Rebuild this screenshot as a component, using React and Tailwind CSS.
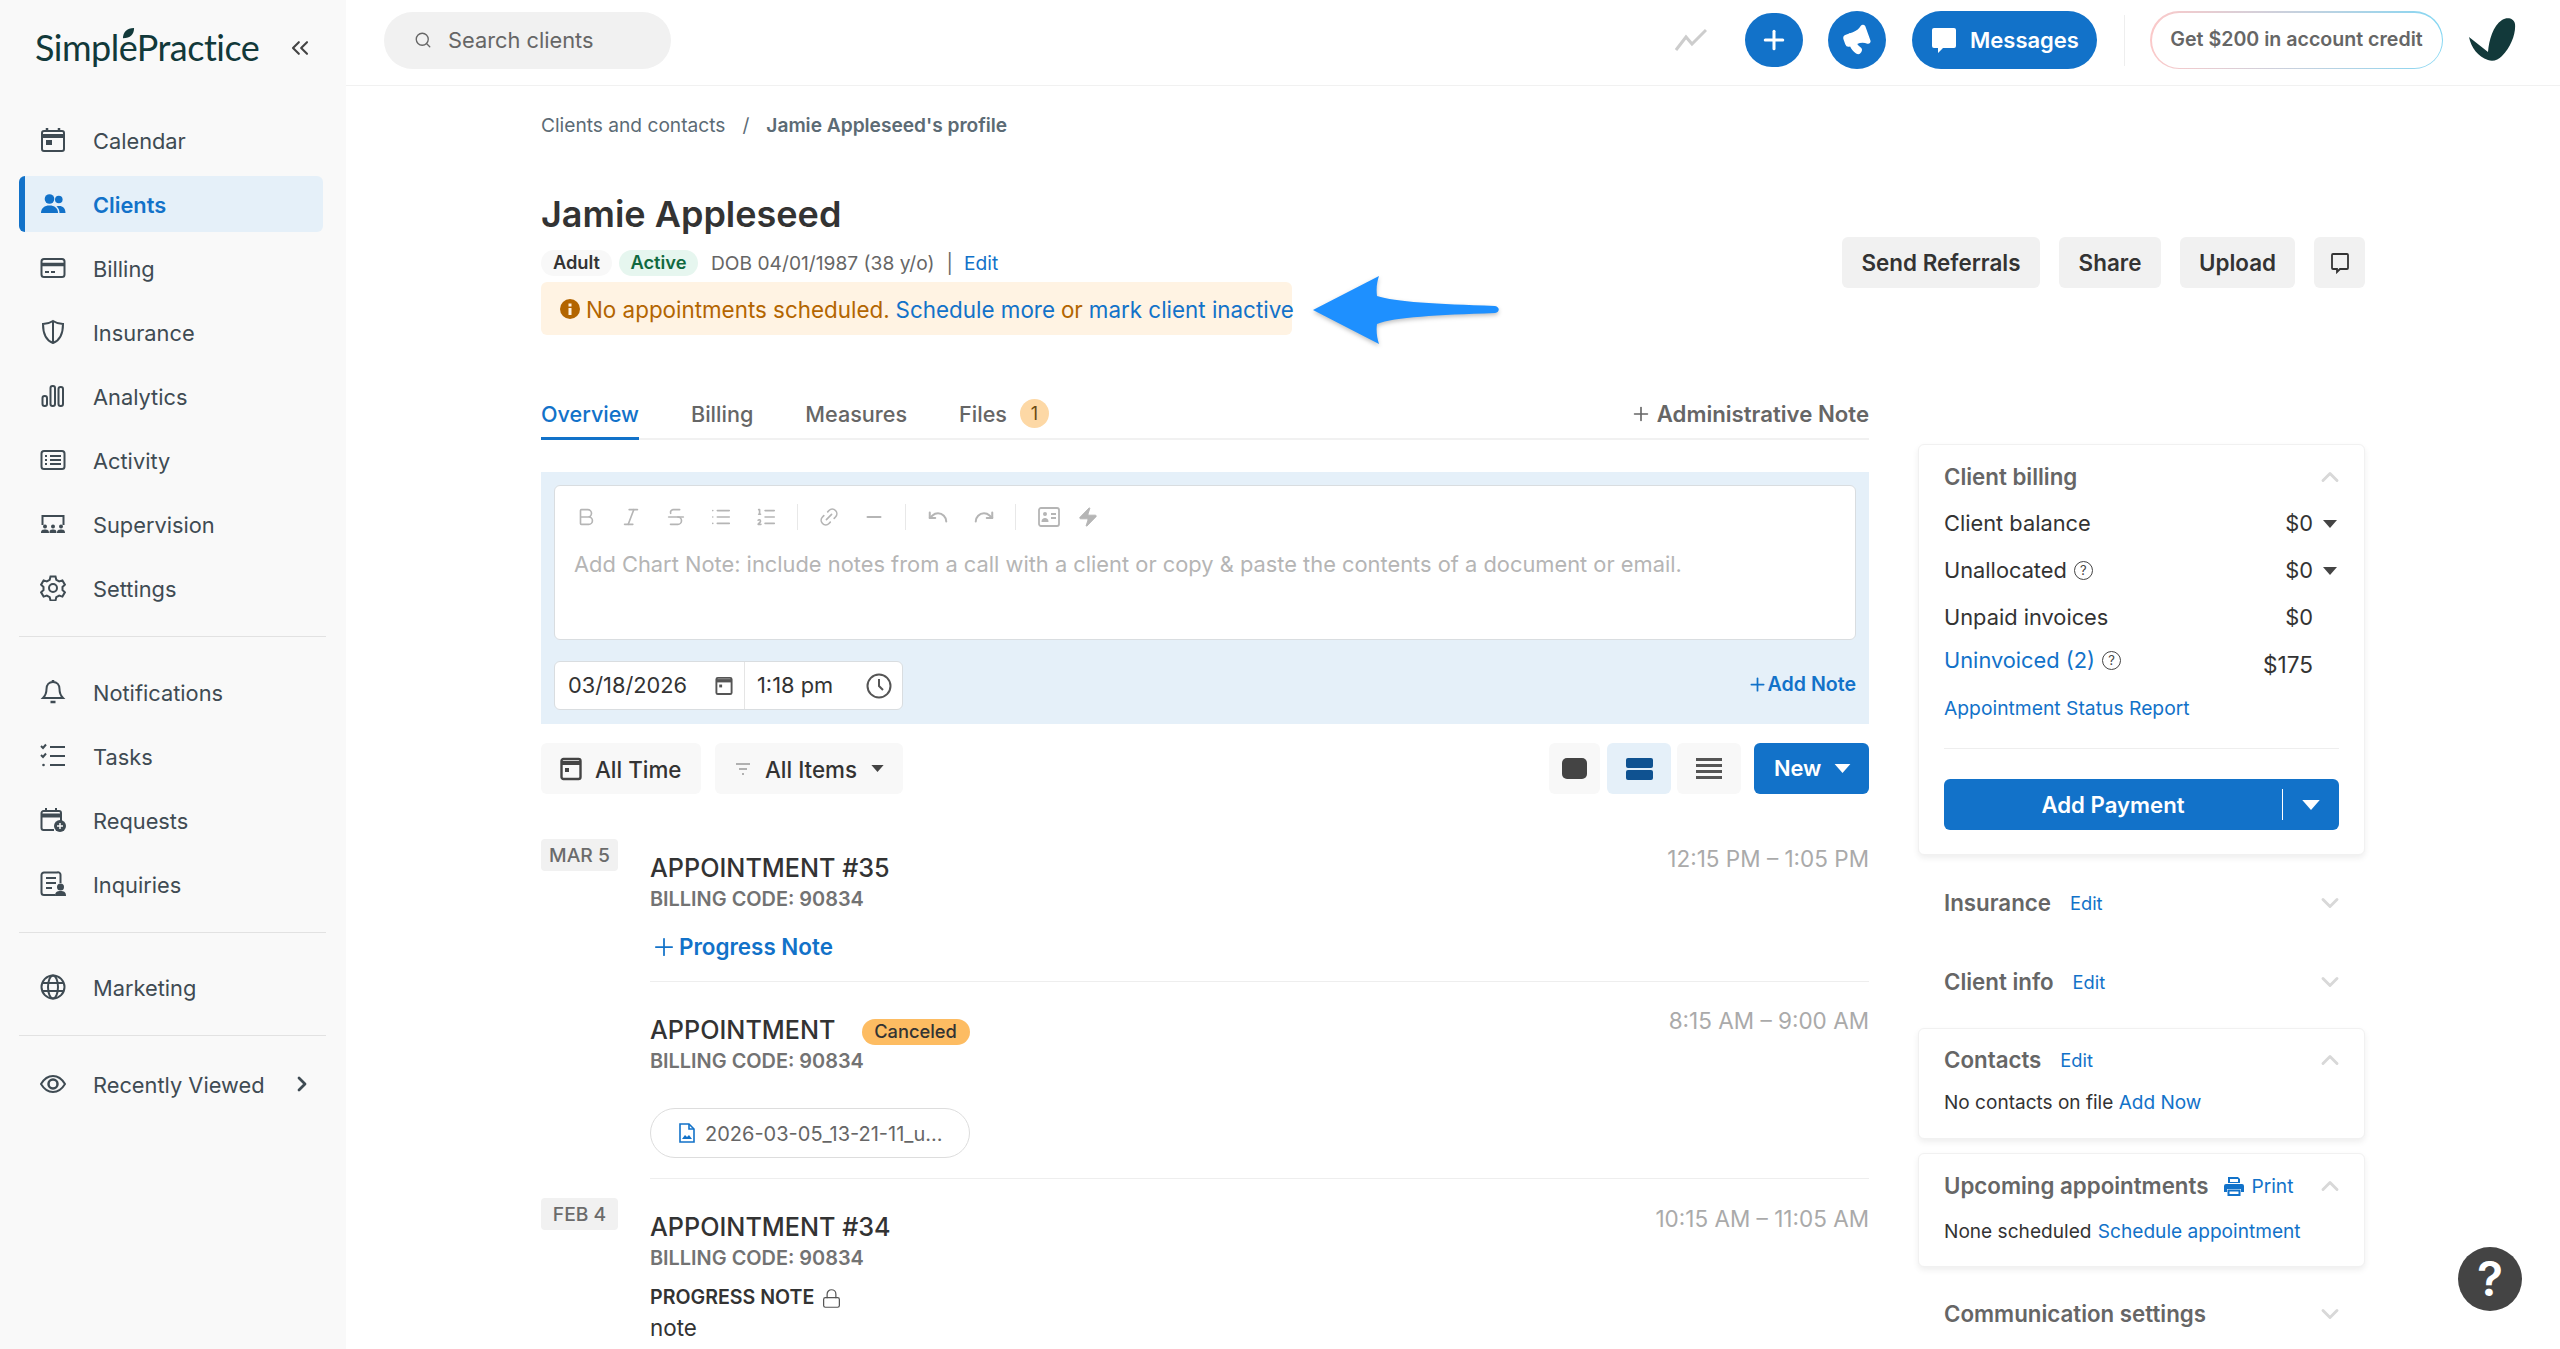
import React from 'react'
import {
  Bold, Italic, Strikethrough, List, ListOrdered, Link2, Minus, Undo, Redo, Zap,
  Plus, Megaphone, ChevronsLeft, ChevronRight, ChevronUp, ChevronDown, Search, Lock,
} from 'lucide-react'

const iconProps = { viewBox: '0 0 26 26', fill: 'none', stroke: 'currentColor', strokeWidth: 2 }

// sidebar icons
const CalendarIcon = () => (
  <svg {...iconProps} className="w-[26px] h-[26px]">
    <rect x="2" y="4" width="22" height="20" rx="2" />
    <path d="M2 9h22" strokeWidth="4" />
    <path d="M7 1v4M19 1v4" strokeWidth="2.5" />
    <rect x="6" y="13" width="6" height="5" fill="currentColor" stroke="none" />
  </svg>
)
const ClientsIcon = () => (
  <svg viewBox="0 0 26 26" fill="currentColor" className="w-[26px] h-[26px]">
    <circle cx="9.5" cy="8" r="4.8" />
    <circle cx="18.8" cy="8.5" r="3.8" />
    <path d="M1 22c0-5 3.5-7.5 8.5-7.5S18 17 18 22z" />
    <path d="M19.5 22c0-3-1-5-3-6.6 5-1.6 9 1 9 6.6z" />
  </svg>
)
const BillingIcon = () => (
  <svg {...iconProps} className="w-[26px] h-[26px]">
    <rect x="1.5" y="4" width="23" height="18" rx="2.5" />
    <path d="M1.5 9.5h23" strokeWidth="3.5" />
    <path d="M5 17h4M11 17h4" />
  </svg>
)
const InsuranceIcon = () => (
  <svg {...iconProps} className="w-[26px] h-[26px]">
    <path d="M13 2c3 2 6 3 10 3 0 9-2 16-10 19C5 21 3 14 3 5c4 0 7-1 10-3z" />
    <path d="M13 2v22" />
  </svg>
)
const AnalyticsIcon = () => (
  <svg {...iconProps} className="w-[26px] h-[26px]">
    <rect x="2.5" y="13" width="4.5" height="10" rx="2" />
    <rect x="10.5" y="3" width="4.5" height="20" rx="2" />
    <rect x="18.5" y="4" width="4.5" height="19" rx="2" />
  </svg>
)
const ActivityIcon = () => (
  <svg {...iconProps} className="w-[26px] h-[26px]">
    <rect x="1.5" y="4" width="23" height="18" rx="2.5" />
    <path d="M10 9h11M10 13h11M10 17h11M5 9h2M5 13h2M5 17h2" />
  </svg>
)
const SupervisionIcon = () => (
  <svg viewBox="0 0 26 26" className="w-[26px] h-[26px]" fill="currentColor">
    <path d="M2.5 14V5h21v9" fill="none" stroke="currentColor" strokeWidth="2" />
    <circle cx="5" cy="15.5" r="2" /><circle cx="13" cy="15.5" r="2" /><circle cx="21" cy="15.5" r="2" />
    <path d="M1 22c0-3 1.5-3.5 4-3.5s4 .5 4 3.5zM9.5 22c0-3 1-3.5 3.5-3.5s3.5.5 3.5 3.5zM17 22c0-3 1.5-3.5 4-3.5s4 .5 4 3.5z" />
  </svg>
)
const SettingsIcon = () => (
  <svg {...iconProps} className="w-[26px] h-[26px]">
    <circle cx="13" cy="13" r="4" />
    <path d="M10.5 2h5l.8 3.3 2.9 1.6 3.2-1 2.5 4.3-2.4 2.3v3l2.4 2.3-2.5 4.3-3.2-1-2.9 1.6-.8 3.300h-5l-.8-3.3-2.9-1.6-3.2 1L1.100 17.800l2.4-2.3v-3L1.100 10.200l2.500-4.300 3.200 1 2.900-1.600z" transform="translate(0 -.5)" />
  </svg>
)
const BellIcon = () => (
  <svg {...iconProps} className="w-[26px] h-[26px]">
    <path d="M13 3c-4 0-6.5 3-6.5 7 0 5-1.500 7-3.500 9h20c-2-2-3.500-4-3.500-9 0-4-2.500-7-6.500-7z" />
    <path d="M13 1v2M10.5 23h5" strokeWidth="2.5" />
  </svg>
)
const TasksIcon = () => (
  <svg {...iconProps} className="w-[26px] h-[26px]">
    <path d="M10 4h15M10 13h15M10 22h15" />
    <path d="M1 3l2 2 3-3.5M1 12l2 2 3-3.5" />
    <circle cx="3.5" cy="22" r="1.3" fill="currentColor" stroke="none" />
  </svg>
)
const RequestsIcon = () => (
  <svg viewBox="0 0 26 26" className="w-[26px] h-[26px]" fill="none" stroke="currentColor" strokeWidth="2">
    <path d="M14 23H3.5a2 2 0 0 1-2-2V6a2 2 0 0 1 2-2H19a2 2 0 0 1 2 2v8" />
    <path d="M1.5 8.5h19.5" strokeWidth="4" />
    <path d="M6 1v4M16 1v4" />
    <circle cx="20" cy="19" r="6" fill="currentColor" stroke="none" />
    <path d="M20 16v6M17 19h6" stroke="#f9f9f9" strokeWidth="1.5" />
  </svg>
)
const InquiriesIcon = () => (
  <svg viewBox="0 0 26 26" className="w-[26px] h-[26px]" fill="none" stroke="currentColor" strokeWidth="2">
    <path d="M15 24H4a2.5 2.5 0 0 1-2.5-2.5V4A2.5 2.5 0 0 1 4 1.5h13A2.5 2.5 0 0 1 20.5 4v8" />
    <path d="M6 7h10M6 12h10M6 17h6" />
    <circle cx="20.5" cy="16" r="3.5" fill="currentColor" stroke="none" />
    <path d="M15 25c0-4 2-5 5.5-5s5.500 1 5.500 5z" fill="currentColor" stroke="none" />
  </svg>
)
const GlobeIcon = () => (
  <svg {...iconProps} className="w-[26px] h-[26px]">
    <circle cx="13" cy="13" r="11.5" />
    <ellipse cx="13" cy="13" rx="5" ry="11.5" />
    <path d="M2 9h22M2 17h22" />
  </svg>
)
const EyeIcon = () => (
  <svg {...iconProps} className="w-[26px] h-[26px]">
    <path d="M1 13c3-5 7-8 12-8s9 3 12 8c-3 5-7 8-12 8s-9-3-12-8z" />
    <circle cx="13" cy="13" r="4.5" strokeWidth="2.5" />
  </svg>
)

const Caret = ({ className = '' }) => (
  <svg viewBox="0 0 14 8" fill="currentColor" className={className}><path d="M0 0h14L7 8z" /></svg>
)

const HelpDot = () => (
  <span className="inline-flex items-center justify-center w-[19px] h-[19px] rounded-full border-[1.5px] border-[#444] text-[13px] leading-none text-[#444]">?</span>
)

const NavItem = ({ icon, label, active, children }) => (
  <div className={`flex items-center h-[56px] w-[304px] border-l-[6px] pl-[15px] rounded-[6px] ${active ? 'bg-[#e5f0f9] border-[#1272c9] text-[#1272c9] font-semibold' : 'border-transparent text-[#3f4b53]'}`}>
    <span className="w-[26px] h-[26px] shrink-0">{icon}</span>
    <span className="ml-[27px] pt-[2px] text-[21.8px]">{label}</span>
    {children}
  </div>
)

const Sidebar = () => (
  <aside className="w-[346px] shrink-0 h-full bg-[#f9f9f9] flex flex-col">
    <div className="h-[112px] pl-[35px] pr-[32px] flex items-start justify-between">
      <div className="relative mt-[23px] text-[#12393a] font-[family-name:Lato,sans-serif] text-[36px] leading-[48px] tracking-[-0.5px]">
        SimplePractice
        <svg viewBox="0 0 14 14" className="absolute left-[87px] top-[4px] w-[13px] h-[13px]" fill="#12393a">
          <path d="M1 12C1 6 5 1 13 1c0 7-4 11-12 11z" />
        </svg>
      </div>
      <ChevronsLeft className="mt-[34px] w-[28px] h-[28px] text-[#444]" strokeWidth={1.8} />
    </div>
    <nav className="pl-[19px] flex flex-col gap-[8px]">
      <NavItem icon={<CalendarIcon />} label="Calendar" />
      <NavItem icon={<ClientsIcon />} label="Clients" active />
      <NavItem icon={<BillingIcon />} label="Billing" />
      <NavItem icon={<InsuranceIcon />} label="Insurance" />
      <NavItem icon={<AnalyticsIcon />} label="Analytics" />
      <NavItem icon={<ActivityIcon />} label="Activity" />
      <NavItem icon={<SupervisionIcon />} label="Supervision" />
      <NavItem icon={<SettingsIcon />} label="Settings" />
    </nav>
    <div className="ml-[19px] w-[307px] mt-[20px] border-t border-[#e2e2e2]" />
    <nav className="pl-[19px] mt-[27px] flex flex-col gap-[8px]">
      <NavItem icon={<BellIcon />} label="Notifications" />
      <NavItem icon={<TasksIcon />} label="Tasks" />
      <NavItem icon={<RequestsIcon />} label="Requests" />
      <NavItem icon={<InquiriesIcon />} label="Inquiries" />
    </nav>
    <div className="ml-[19px] w-[307px] mt-[20px] border-t border-[#e2e2e2]" />
    <div className="pl-[19px] mt-[26px]"><NavItem icon={<GlobeIcon />} label="Marketing" /></div>
    <div className="ml-[19px] w-[307px] mt-[20px] border-t border-[#e2e2e2]" />
    <div className="pl-[19px] mt-[20px]">
      <NavItem icon={<EyeIcon />} label="Recently Viewed">
        <ChevronRight className="ml-auto mr-[9px] w-[24px] h-[24px] text-[#3f4b53]" strokeWidth={2.8} />
      </NavItem>
    </div>
  </aside>
)

const TopBar = () => (
  <header className="h-[86px] shrink-0 border-b border-[#f1f1f1] flex items-center pb-[5px] bg-white">
    <div className="ml-[38px] w-[287px] h-[57px] rounded-full bg-[#f1f1f1] flex items-center pl-[30px] text-[#666]">
      <Search className="w-[18px] h-[18px]" strokeWidth={1.8} />
      <span className="ml-[16px] text-[21.8px]">Search clients</span>
    </div>
    <div className="ml-auto flex items-center">
      <svg viewBox="0 0 32 24" className="w-[32px] h-[24px] mr-[38px]" fill="none" stroke="#cdcdcd" strokeWidth="3">
        <path d="M1 22L11 9l6 7L31 2" />
      </svg>
      <div className="w-[58px] h-[54px] rounded-full bg-[#1272c9] flex items-center justify-center mr-[25px] text-white">
        <Plus className="w-[30px] h-[30px]" strokeWidth={2.4} />
      </div>
      <div className="w-[58px] h-[58px] rounded-full bg-[#1272c9] flex items-center justify-center mr-[26px] text-white">
        <Megaphone className="w-[30px] h-[30px] -rotate-[20deg]" fill="white" strokeWidth={2} />
      </div>
      <div className="w-[185px] h-[58px] rounded-full bg-[#1272c9] flex items-center pl-[19px] mr-[27px] text-white">
        <svg viewBox="0 0 26 26" className="w-[26px] h-[26px]" fill="white">
          <path d="M3 1h20a2 2 0 0 1 2 2v16a2 2 0 0 1-2 2H12l-5 5v-5H3a2 2 0 0 1-2-2V3a2 2 0 0 1 2-2z" />
        </svg>
        <span className="ml-[13px] text-[22px] font-semibold">Messages</span>
      </div>
      <div className="w-px h-[51px] bg-[#eeeeee] mr-[25px]" />
      <div className="w-[293px] h-[58px] rounded-full p-[1.5px] bg-gradient-to-r from-[#fbc9c9] to-[#83d6f2] mr-[26px]">
        <div className="w-full h-full rounded-full bg-white flex items-center justify-center text-[19.6px] font-semibold text-[#666]">
          Get $200 in account credit
        </div>
      </div>
      <svg viewBox="0 0 47 44" className="w-[47px] h-[44px] mr-[44px]" fill="#12393a">
        <path d="M33 2c5-3 12-2 13 4 1 9-4 23-13 32-4 4-9 6-14 4C9 39 2 29 0 19l19 15c1-12 5-26 14-32z" />
      </svg>
    </div>
  </header>
)

const GreyButton = ({ className = '', children }) => (
  <div className={`h-[51px] rounded-[6px] bg-[#f1f1f1] flex items-center justify-center text-[22.4px] font-semibold text-[#333] ${className}`}>{children}</div>
)

const ProfileHead = () => (
  <div className="flex justify-between">
    <div className="relative">
      <h1 className="h-[44px] leading-[44px] text-[36px] font-semibold text-[#333]">Jamie Appleseed</h1>
      <div className="mt-[14px] h-[26px] flex items-center text-[19.2px]">
        <span className="w-[71px] h-[26px] rounded-full bg-[#f8f8f8] flex items-center justify-center text-[18.3px] font-semibold text-[#333]">Adult</span>
        <span className="ml-[7px] w-[79px] h-[26px] rounded-full bg-[#e6f6ef] flex items-center justify-center text-[18.3px] font-semibold text-[#10693f]">Active</span>
        <span className="ml-[13px] text-[#666]">DOB 04/01/1987 (38 y/o)</span>
        <span className="ml-[12px] text-[#666]">|</span>
        <span className="ml-[11px] text-[#1272c9]">Edit</span>
      </div>
      <div className="mt-[6px] w-[751px] h-[53px] rounded-[6px] bg-[#fff3e3] flex items-center pl-[19px] text-[22.4px] whitespace-nowrap">
        <svg viewBox="0 0 20 20" className="w-[20px] h-[20px] shrink-0">
          <circle cx="10" cy="10" r="10" fill="#b36500" />
          <rect x="8.5" y="9" width="3" height="7" fill="#fff3e3" />
          <rect x="8.5" y="4.5" width="3" height="3" fill="#fff3e3" />
        </svg>
        <span className="ml-[6px] pt-[2px] text-[#b36500]">No appointments scheduled.</span>
        <span className="ml-[6px] pt-[2px] text-[#1272c9]">Schedule more</span>
        <span className="ml-[6px] pt-[2px] text-[#b36500]">or</span>
        <span className="ml-[6px] pt-[2px] text-[#1272c9]">mark client inactive</span>
      </div>
      {/* annotation arrow over the page */}
      <svg viewBox="0 0 186 68" className="absolute left-[772px] top-[84px] w-[186px] h-[68px] drop-shadow-[0_2px_2px_rgba(0,0,0,0.25)]" fill="#1e90ff">
        <path d="M0 34L66 0c-2 6-3 12-2 20 18 6 60 8 118 10 5 1 5 6 0 7-58 2-100 4-118 11-1 7 0 14 2 20z" />
      </svg>
    </div>
    <div className="mt-[45px] flex gap-[19px]">
      <GreyButton className="w-[198px]">Send Referrals</GreyButton>
      <GreyButton className="w-[102px]">Share</GreyButton>
      <GreyButton className="w-[115px]">Upload</GreyButton>
      <GreyButton className="w-[51px]">
        <svg viewBox="0 0 20 22" className="w-[20px] h-[22px]" fill="none" stroke="#333" strokeWidth="1.8">
          <path d="M3 2h14a1 1 0 0 1 1 1v13a1 1 0 0 1-1 1H10l-3 3v-3H3a1 1 0 0 1-1-1V3a1 1 0 0 1 1-1z" />
        </svg>
      </GreyButton>
    </div>
  </div>
)

const Tabs = () => (
  <div className="h-[41px] border-b-2 border-[#f1f1f1] flex items-start text-[21.6px] font-medium text-[#666]">
    <div className="h-[41px] w-[98px] leading-[28px] pt-[1px] text-[#1272c9] border-b-[3px] border-[#1272c9] whitespace-nowrap">Overview</div>
    <div className="ml-[52px] leading-[28px] pt-[1px]">Billing</div>
    <div className="ml-[52px] leading-[28px] pt-[1px]">Measures</div>
    <div className="ml-[52px] leading-[28px] pt-[1px]">Files</div>
    <div className="ml-[13px] w-[29px] h-[29px] rounded-full bg-[#fdd8a5] flex items-center justify-center text-[18px] font-normal text-[#6b4a12]">1</div>
    <div className="ml-auto flex items-center leading-[28px] pt-[1px] text-[22.2px] font-semibold">
      <Plus className="w-[22px] h-[22px] mr-[5px]" strokeWidth={1.8} />
      Administrative Note
    </div>
  </div>
)

const tool = 'w-[22px] h-[22px]'
const Sep = () => <span className="w-px h-[26px] bg-[#e8e8e8] mx-[20px]" />

const NoteEditor = () => (
  <div className="mt-[32px] h-[252px] bg-[#e5f0f9] px-[13px] pt-[13px]">
    <div className="h-[155px] rounded-[6px] bg-white border border-[#d9dde0] pt-[19px] pl-[20px]">
      <div className="h-[24px] flex items-center text-[#b5b5b5]">
        <div className="flex gap-[23px]">
          <Bold className={tool} strokeWidth={1.8} />
          <Italic className={tool} strokeWidth={1.8} />
          <Strikethrough className={tool} strokeWidth={1.8} />
          <List className={tool} strokeWidth={1.8} />
          <ListOrdered className={tool} strokeWidth={1.8} />
        </div>
        <Sep />
        <div className="flex gap-[23px]">
          <Link2 className={`${tool} -rotate-45`} strokeWidth={1.8} />
          <Minus className={tool} strokeWidth={2.4} />
        </div>
        <Sep />
        <div className="flex gap-[24px]">
          <Undo className={`${tool} ml-[1px]`} strokeWidth={2.2} />
          <Redo className={tool} strokeWidth={2.2} />
        </div>
        <Sep />
        <div className="flex gap-[17px]">
          <svg viewBox="0 0 22 22" className={`${tool} ml-[2px]`} fill="none" stroke="currentColor" strokeWidth="1.8">
            <rect x="1" y="2" width="20" height="18" rx="2" />
            <circle cx="7" cy="8" r="2" fill="currentColor" stroke="none" />
            <path d="M3.5 16c0-3 1.5-4 3.5-4s3.5 1 3.5 4z" fill="currentColor" stroke="none" />
            <path d="M13 8h5M13 12h5" />
          </svg>
          <Zap className={tool} fill="currentColor" strokeWidth={1} />
        </div>
      </div>
      <div className="mt-[20px] h-[30px] leading-[30px] -ml-[1px] text-[21.85px] text-[#b5b5b5]">
        Add Chart Note: include notes from a call with a client or copy &amp; paste the contents of a document or email.
      </div>
    </div>
    <div className="mt-[21px] flex items-center justify-between">
      <div className="w-[349px] h-[49px] rounded-[6px] bg-white border border-[#d9dde0] flex items-center text-[21.8px] text-[#333]">
        <div className="w-[190px] h-full flex items-center pl-[13px] border-r border-[#e5e5e5]">
          03/18/2026
          <svg viewBox="0 0 18 20" className="ml-auto mr-[11px] w-[18px] h-[19px]" fill="none" stroke="#555" strokeWidth="2">
            <rect x="1" y="2" width="16" height="17" rx="1.5" />
            <path d="M1 5h16" strokeWidth="3.5" />
            <rect x="4" y="9" width="3" height="3" fill="#555" stroke="none" />
          </svg>
        </div>
        <div className="flex-1 h-full flex items-center pl-[12px]">
          1:18 pm
          <svg viewBox="0 0 26 26" className="ml-auto mr-[10px] w-[26px] h-[26px]" fill="none" stroke="#555" strokeWidth="2">
            <circle cx="13" cy="13" r="11.5" />
            <path d="M13 6v7l4 4" />
          </svg>
        </div>
      </div>
      <div className="-mt-[2px] flex items-center text-[19.6px] font-semibold text-[#1272c9]">
        <Plus className="w-[21px] h-[21px]" strokeWidth={2} />
        Add Note
      </div>
    </div>
  </div>
)

const FilterBar = () => (
  <div className="mt-[19px] h-[51px] flex items-center text-[22.4px] font-medium text-[#333]">
    <div className="w-[160px] h-[51px] rounded-[6px] bg-[#f8f8f8] flex items-center pl-[19px]">
      <svg viewBox="0 0 22 24" className="w-[22px] h-[24px]" fill="none" stroke="#444" strokeWidth="2.4">
        <rect x="1.5" y="2" width="19" height="20" rx="2" />
        <path d="M1.5 6h19" strokeWidth="4" />
        <rect x="5" y="11" width="4" height="4" fill="#444" stroke="none" />
      </svg>
      <span className="ml-[13px] pt-[2px]">All Time</span>
    </div>
    <div className="ml-[14px] w-[188px] h-[51px] rounded-[6px] bg-[#f8f8f8] flex items-center pl-[20px]">
      <svg viewBox="0 0 16 14" className="w-[16px] h-[14px]" fill="none" stroke="#999" strokeWidth="1.6">
        <path d="M1 2h14M4 7h8M7 12h2" />
      </svg>
      <span className="ml-[14px] pt-[2px]">All Items</span>
      <Caret className="ml-[14px] w-[13px] h-[7px] text-[#444]" />
    </div>
    <div className="ml-auto w-[51px] h-[51px] rounded-[6px] bg-[#f8f8f8] flex items-center justify-center">
      <div className="w-[25px] h-[21px] rounded-[5px] bg-[#444]" />
    </div>
    <div className="ml-[7px] w-[64px] h-[51px] rounded-[6px] bg-[#e5f0f9] flex flex-col items-center justify-center gap-[2px]">
      <div className="w-[27px] h-[10px] rounded-[2px] bg-[#0f5291]" />
      <div className="w-[27px] h-[10px] rounded-[2px] bg-[#0f5291]" />
    </div>
    <div className="ml-[6px] w-[64px] h-[51px] rounded-[6px] bg-[#f8f8f8] flex flex-col items-center justify-center gap-[3px]">
      <div className="w-[26px] h-[3px] bg-[#555]" />
      <div className="w-[26px] h-[3px] bg-[#555]" />
      <div className="w-[26px] h-[3px] bg-[#555]" />
      <div className="w-[26px] h-[3px] bg-[#555]" />
    </div>
    <div className="ml-[13px] w-[115px] h-[51px] rounded-[6px] bg-[#1272c9] flex items-center pl-[20px] text-[21.8px] text-white font-semibold">
      New
      <Caret className="ml-[13px] w-[17px] h-[9px] text-white" />
    </div>
  </div>
)

const DateTag = ({ children }) => (
  <div className="w-[77px] h-[32px] shrink-0 rounded-[4px] bg-[#f1f1f1] flex items-center justify-center pt-[1px] text-[19.3px] font-medium text-[#6b6b6b]">{children}</div>
)

const ApptHead = ({ title, time, badge, timeClass = '-mt-[9px]' }) => (
  <div className="flex items-start justify-between h-[30px]">
    <div className="flex items-center h-[30px]">
      <span className="text-[25.2px] font-medium text-[#333] leading-[30px]">{title}</span>
      {badge}
    </div>
    <span className={`${timeClass} h-[30px] leading-[30px] text-[22.5px] text-[#aaaaaa]`}>{time}</span>
  </div>
)

const BillingCode = () => (
  <div className="mt-[4px] h-[24px] leading-[24px] text-[19.9px] font-semibold text-[#737373]">BILLING CODE: 90834</div>
)

const Timeline = () => (
  <div className="mt-[45px]">
    <div className="flex">
      <DateTag>MAR 5</DateTag>
      <div className="ml-[32px] flex-1">
        <div className="pt-[14px]">
          <ApptHead title="APPOINTMENT #35" time="12:15 PM – 1:05 PM" />
          <BillingCode />
          <div className="mt-[21px] h-[30px] flex items-center text-[22.4px] font-semibold text-[#1272c9]">
            <Plus className="w-[28px] h-[28px] mr-[1px]" strokeWidth={1.5} />
            Progress Note
          </div>
        </div>
        <div className="mt-[19px] border-t border-[#eeeeee]" />
        <div className="pt-[33px]">
          <ApptHead
            title="APPOINTMENT"
            time="8:15 AM – 9:00 AM"
            badge={<span className="ml-[26px] mt-[4px] w-[108px] h-[26px] rounded-full bg-[#fdbc62] flex items-center justify-center text-[18.3px] font-medium text-[#333]">Canceled</span>}
          />
          <BillingCode />
          <div className="mt-[35px] w-[320px] h-[50px] rounded-full border border-[#dddddd] flex items-center pl-[28px] text-[20px] text-[#666]">
            <svg viewBox="0 0 16 20" className="w-[16px] h-[20px]" fill="none" stroke="#1272c9" strokeWidth="1.6">
              <path d="M1 1h9l5 5v13H1z" />
              <path d="M10 1v5h5" />
              <path d="M3 16l3-4 2 2 2-2 3 4z" fill="#1272c9" stroke="none" />
            </svg>
            <span className="ml-[10px] pt-[1px]">2026-03-05_13-21-11_u...</span>
          </div>
        </div>
        <div className="mt-[20px] border-t border-[#eeeeee]" />
      </div>
    </div>
    <div className="mt-[19px] flex">
      <DateTag>FEB 4</DateTag>
      <div className="ml-[32px] flex-1 pt-[14px]">
        <ApptHead title="APPOINTMENT #34" time="10:15 AM – 11:05 AM" timeClass="-mt-[8px]" />
        <BillingCode />
        <div className="mt-[16px] h-[24px] flex items-center text-[19.6px] font-semibold text-[#333]">
          PROGRESS NOTE
          <Lock className="ml-[7px] w-[21px] h-[21px] text-[#555]" strokeWidth={1.4} />
        </div>
        <div className="mt-[4px] h-[28px] leading-[28px] text-[22.4px] text-[#333]">note</div>
      </div>
    </div>
  </div>
)

const card = 'rounded-[6px] border border-[#f1f1f1] bg-white shadow-[0_3px_6px_rgba(0,0,0,0.07)] px-[25px]'

const SectionTitle = ({ title, edit, open, children }) => (
  <div className="h-[26px] flex items-center">
    <span className="text-[22.3px] font-semibold text-[#666]">{title}</span>
    {edit && <span className="ml-[19px] mt-[2px] text-[18.3px] text-[#1272c9]">Edit</span>}
    {children}
    {open
      ? <ChevronUp className="ml-auto w-[28px] h-[28px] -mr-[5px] text-[#d8d8d8]" strokeWidth={2.5} />
      : <ChevronDown className="ml-auto w-[28px] h-[28px] -mr-[5px] text-[#d8d8d8]" strokeWidth={2.5} />}
  </div>
)

const BillingRow = ({ className = '', label, value, caret }) => (
  <div className={`h-[30px] flex items-center justify-between text-[21.8px] text-[#333] ${className}`}>
    <span className="flex items-center gap-[7px]">{label}</span>
    <span className={`flex items-center ${caret ? '' : 'pr-[26px]'}`}>
      {value}
      {caret && <Caret className="ml-[10px] mt-[2px] mr-[2px] w-[14px] h-[8px] text-[#444]" />}
    </span>
  </div>
)

const RightColumn = () => (
  <div className="w-[447px] shrink-0 pt-[45px]">
    <div className={`${card} pt-[19px] pb-[24px]`}>
      <SectionTitle title="Client billing" open />
      <BillingRow className="mt-[18px]" label="Client balance" value="$0" caret />
      <BillingRow className="mt-[17px]" label={<>Unallocated <HelpDot /></>} value="$0" caret />
      <BillingRow className="mt-[17px]" label="Unpaid invoices" value="$0" />
      <div className="mt-[13px] h-[30px] flex justify-between text-[21.8px] text-[#333]">
        <span className="flex items-center gap-[7px] text-[#1272c9]">Uninvoiced (2) <HelpDot /></span>
        <span className="mt-[5px] pr-[26px] text-[22.6px] leading-[30px]">$175</span>
      </div>
      <div className="mt-[21px] h-[24px] leading-[24px] text-[19.3px] text-[#1272c9]">Appointment Status Report</div>
      <div className="mt-[28px] border-t border-[#eeeeee]" />
      <div className="mt-[30px] h-[51px] rounded-[6px] bg-[#1272c9] flex items-center text-white text-[22.2px] font-semibold">
        <span className="flex-1 text-center">Add Payment</span>
        <span className="w-px h-[31px] bg-white" />
        <span className="w-[56px] flex justify-center"><Caret className="w-[18px] h-[10px] text-white" /></span>
      </div>
    </div>
    <div className="mt-[35px] px-[26px]"><SectionTitle title="Insurance" edit /></div>
    <div className="mt-[53px] px-[26px]"><SectionTitle title="Client info" edit /></div>
    <div className={`${card} mt-[33px] pt-[18px] pb-[23px]`}>
      <SectionTitle title="Contacts" edit open />
      <div className="mt-[18px] h-[24px] leading-[24px] text-[19.05px] text-[#333]">
        No contacts on file <span className="text-[#1272c9]">Add Now</span>
      </div>
    </div>
    <div className={`${card} mt-[14px] pt-[19px] pb-[23px]`}>
      <SectionTitle title="Upcoming appointments" open>
        <span className="ml-[16px] flex items-center gap-[7px] text-[19.2px] text-[#1272c9]">
          <svg viewBox="0 0 20 20" className="w-[20px] h-[20px]" fill="currentColor">
            <path d="M4 1h10l2 2v4H4z" />
            <path d="M2 8h16a2 2 0 0 1 2 2v6h-3v-3H3v3H0v-6a2 2 0 0 1 2-2z" />
            <path d="M4.500 14.500h11V19h-11z" fill="none" stroke="currentColor" strokeWidth="2" />
            <rect x="6" y="3" width="8" height="3" fill="white" />
          </svg>
          Print
        </span>
      </SectionTitle>
      <div className="mt-[20px] h-[24px] leading-[24px] text-[19.1px] text-[#333]">
        None scheduled <span className="ml-[1px] text-[#1272c9]">Schedule appointment</span>
      </div>
    </div>
    <div className="mt-[34px] px-[26px]"><SectionTitle title="Communication settings" /></div>
  </div>
)

const App = () => (
  <div className="relative w-full h-screen overflow-hidden flex bg-white font-[family-name:Inter,sans-serif]">
    <Sidebar />
    <main className="flex-1 min-w-0 h-full flex flex-col overflow-hidden">
      <TopBar />
      <div className="pl-[195px] pr-[195px]">
        <div className="mt-[26px] pt-[1px] h-[24px] leading-[24px] text-[19.15px] text-[#5c6b75]">
          Clients and contacts
          <span className="mx-[17px]">/</span>
          <span className="font-semibold">Jamie Appleseed's profile</span>
        </div>
        <div className="mt-[56px]"><ProfileHead /></div>
        <div className="mt-[64px] flex gap-[49px]">
          <div className="w-[1328px] shrink-0">
            <Tabs />
            <NoteEditor />
            <FilterBar />
            <Timeline />
          </div>
          <RightColumn />
        </div>
      </div>
    </main>
    {/* help button floats over the page */}
    <div className="absolute left-[2458px] top-[1247px] w-[64px] h-[64px] rounded-full bg-[#444] flex items-center justify-center text-white text-[48px] font-semibold">?</div>
  </div>
)

export default App
